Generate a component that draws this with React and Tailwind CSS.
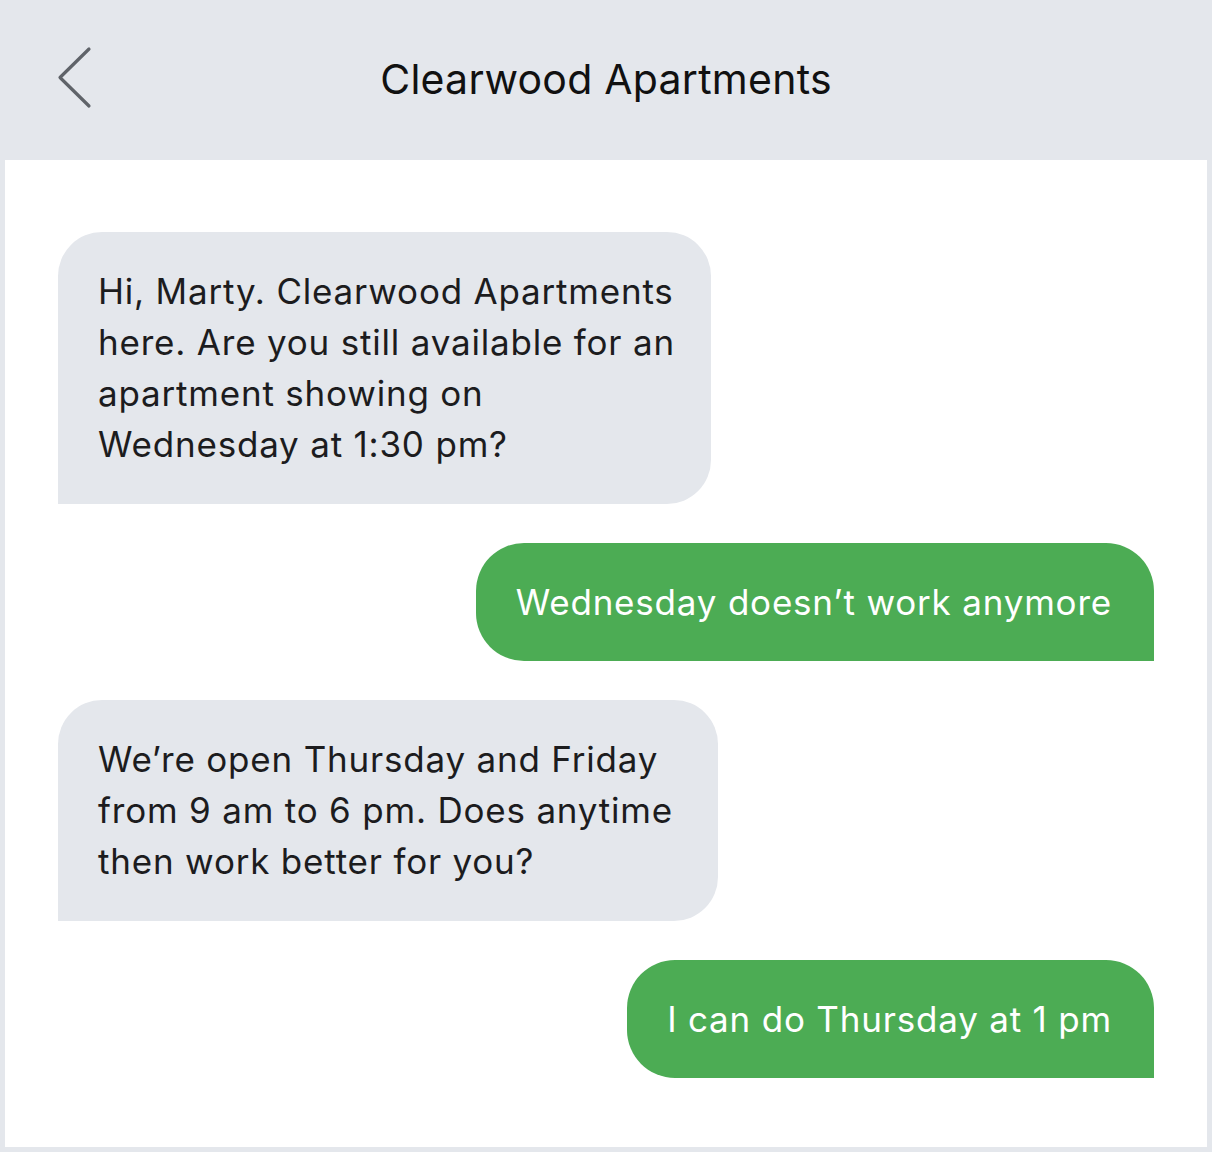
import React from "react";

const messages = [
  {
    from: "them",
    text: "Hi, Marty. Clearwood Apartments here. Are you still available for an apartment showing on Wednesday at 1:30 pm?",
    width: "w-[653px]",
  },
  { from: "me", text: "Wednesday doesn’t work anymore" },
  {
    from: "them",
    text: "We’re open Thursday and Friday from 9 am to 6 pm. Does anytime then work better for you?",
    width: "w-[660px]",
  },
  { from: "me", text: "I can do Thursday at 1 pm" },
];

const Bubble = ({ from, text, width }) => {
  if (from === "me") {
    return (
      <div className="flex justify-end">
        <div className="bg-[#4cac54] text-white rounded-[48px] rounded-br-none pl-[40px] pr-[42px] py-[33px] text-[35px] leading-[52px] tracking-[0.8px]">
          {text}
        </div>
      </div>
    );
  }
  return (
    <div className="flex justify-start">
      <div
        className={`${width} bg-[#e4e7ec] text-[#1c1c1e] rounded-[44px] rounded-bl-none pl-[40px] pr-[30px] py-[34px] text-[35px] leading-[51px] tracking-[0.8px]`}
      >
        {text}
      </div>
    </div>
  );
};

export default function App() {
  return (
    <div
      className="w-[1212px] h-[1152px] bg-[#e4e7ec] flex flex-col px-[5px] pb-[5px]"
      style={{ fontFamily: "Inter, 'Noto Sans', sans-serif" }}
    >
      {/* top bar */}
      <div className="h-[160px] relative flex items-center justify-center shrink-0">
        <svg
          className="absolute left-[49px] top-[46px]"
          width="40"
          height="64"
          viewBox="0 0 40 64"
          fill="none"
        >
          <path
            d="M35 3 L6 31.5 L35 60"
            stroke="#5f6369"
            strokeWidth="3.2"
            strokeLinecap="round"
            strokeLinejoin="round"
          />
        </svg>
        <h1 className="text-[41px] text-[#111] tracking-[0.25px]">
          Clearwood Apartments
        </h1>
      </div>

      {/* thread */}
      <div className="flex-1 bg-white px-[53px] pt-[72px] flex flex-col gap-[39px]">
        {messages.map((m, i) => (
          <Bubble key={i} {...m} />
        ))}
      </div>
    </div>
  );
}
